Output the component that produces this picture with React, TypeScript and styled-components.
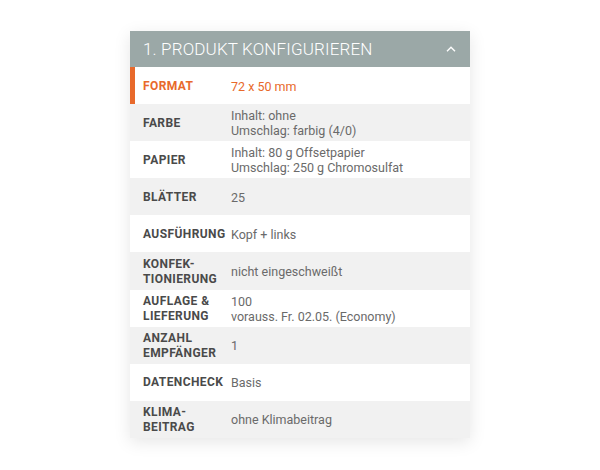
import React from "react";
import styled, { createGlobalStyle } from "styled-components";

const Global = createGlobalStyle`
  html, body { margin: 0; padding: 0; background: #ffffff; }
  body { font-family: Roboto, "Liberation Sans", sans-serif; }
`;

const Page = styled.div`
  width: 600px;
  height: 470px;
  display: flex;
  justify-content: center;
  padding-top: 31px;
  box-sizing: border-box;
`;

const Panel = styled.div`
  width: 340px;
  align-self: flex-start;
  box-shadow: 0 4px 16px rgba(0, 0, 0, 0.1);
  background: #fff;
`;

const Header = styled.div`
  height: 36px;
  background: #9ba8a7;
  display: flex;
  align-items: center;
  justify-content: space-between;
  padding: 0 14px 0 13px;
  color: #fff;
  font-size: 17px;
  font-weight: 300;
  letter-spacing: 0.15px;
`;

const Row = styled.div<{ $shade?: boolean; $active?: boolean }>`
  height: 37.1px;
  display: grid;
  grid-template-columns: 88px 1fr;
  align-items: center;
  padding: 1px 0 0 13px;
  box-sizing: border-box;
  background: ${(p) => (p.$shade ? "#f1f1f1" : "#ffffff")};
  box-shadow: ${(p) => (p.$active ? "inset 5px 0 0 #e8692b" : "none")};
`;

const Label = styled.div<{ $active?: boolean }>`
  font-size: 12px;
  font-weight: 700;
  line-height: 15px;
  color: ${(p) => (p.$active ? "#e8692b" : "#4a4a4a")};
  text-transform: uppercase;
  letter-spacing: 0.4px;
`;

const Value = styled.div<{ $active?: boolean }>`
  font-size: 12.5px;
  line-height: 15px;
  color: ${(p) => (p.$active ? "#e8692b" : "#6a6a6a")};
`;

const rows: { label: string[]; value: string[]; active?: boolean }[] = [
  { label: ["Format"], value: ["72 x 50 mm"], active: true },
  { label: ["Farbe"], value: ["Inhalt: ohne", "Umschlag: farbig (4/0)"] },
  { label: ["Papier"], value: ["Inhalt: 80 g Offsetpapier", "Umschlag: 250 g Chromosulfat"] },
  { label: ["Blätter"], value: ["25"] },
  { label: ["Ausführung"], value: ["Kopf + links"] },
  { label: ["Konfek-", "tionierung"], value: ["nicht eingeschweißt"] },
  { label: ["Auflage &", "Lieferung"], value: ["100", "vorauss. Fr. 02.05. (Economy)"] },
  { label: ["Anzahl", "Empfänger"], value: ["1"] },
  { label: ["Datencheck"], value: ["Basis"] },
  { label: ["Klima-", "beitrag"], value: ["ohne Klimabeitrag"] },
];

export default function App() {
  return (
    <>
      <Global />
      <Page>
        <Panel>
          <Header>
            <span>1. PRODUKT KONFIGURIEREN</span>
            <svg width="10" height="6" viewBox="0 0 10 6">
              <path d="M1 5.2 L5 1.2 L9 5.2" fill="none" stroke="#fff" strokeWidth="1.4" />
            </svg>
          </Header>
          {rows.map((r, i) => (
            <Row key={i} $shade={i % 2 === 1} $active={r.active}>
              <Label $active={r.active}>
                {r.label.map((l, j) => (
                  <div key={j}>{l}</div>
                ))}
              </Label>
              <Value $active={r.active}>
                {r.value.map((v, j) => (
                  <div key={j}>{v}</div>
                ))}
              </Value>
            </Row>
          ))}
        </Panel>
      </Page>
    </>
  );
}
